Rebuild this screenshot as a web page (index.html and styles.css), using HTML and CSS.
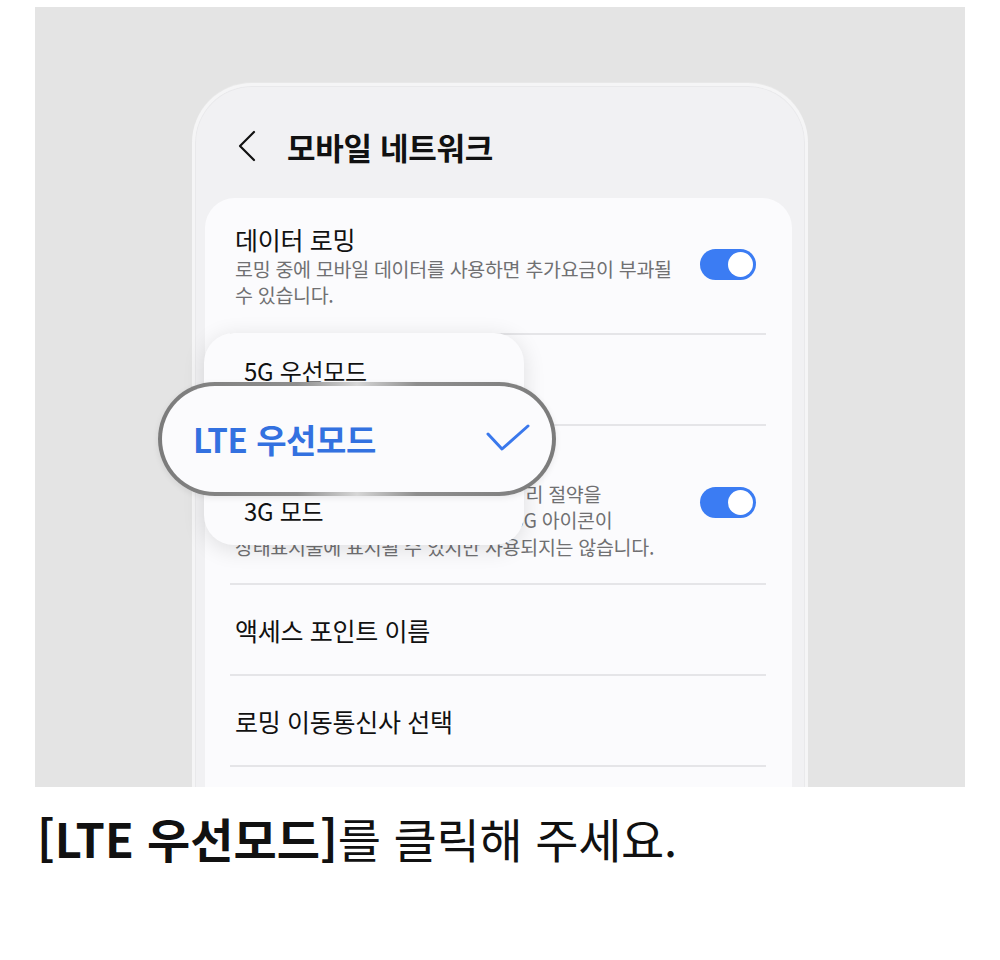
FILE: index.html
```html
<!DOCTYPE html>
<html lang="ko">
<head>
    <meta charset="utf-8">
    <title>모바일 네트워크</title>
    <link rel="stylesheet" href="styles.css">
</head>
<body>
    <div class="stage">
        <div class="phone">
            <div class="appbar">
                <svg class="back" width="20" height="32" viewBox="0 0 20 32">
                    <path d="M17 2 L3 16 L17 30" fill="none" stroke="#111" stroke-width="2.2" stroke-linecap="round" stroke-linejoin="round"/>
                </svg>
                <h1 class="appbar-title">모바일 네트워크</h1>
            </div>

            <div class="card">
                <div class="row row-first">
                    <div class="row-text">
                        <div class="row-title">데이터 로밍</div>
                        <div class="row-sub">로밍 중에 모바일 데이터를 사용하면 추가요금이 부과될<br>수 있습니다.</div>
                    </div>
                    <div class="toggle on"><span class="knob"></span></div>
                </div>

                <div class="row row-plain">
                    <div class="row-text">
                        <div class="row-title">네트워크 모드</div>
                        <div class="row-sub accent">LTE 우선모드</div>
                    </div>
                </div>

                <div class="row row-tall">
                    <div class="row-text">
                        <div class="row-title">5G 끄기</div>
                        <div class="row-sub">모바일 네트워크 연결을 줄여서, 배터리 절약을<br>할 수 있으며 네트워크 환경에 따라 5G 아이콘이<br>상태표시줄에 표시될 수 있지만 사용되지는 않습니다.</div>
                    </div>
                    <div class="toggle on"><span class="knob"></span></div>
                </div>

                <div class="row row-plain">
                    <div class="row-title">액세스 포인트 이름</div>
                </div>

                <div class="row row-plain">
                    <div class="row-title">로밍 이동통신사 선택</div>
                </div>

                <div class="row row-plain">
                    <div class="row-title">네트워크 사업자</div>
                </div>
            </div>
        </div>

        <!-- network mode dropdown -->
        <div class="menu">
            <div class="menu-item">5G 우선모드</div>
            <div class="menu-item selected">
                <div class="focus-pill">
                    <span class="focus-label">LTE 우선모드</span>
                    <svg width="46" height="30" viewBox="0 0 46 30">
                        <path d="M3 10 L17 25 L43 2" fill="none" stroke="#3a78ec" stroke-width="3" stroke-linecap="round" stroke-linejoin="round"/>
                    </svg>
                </div>
            </div>
            <div class="menu-item">3G 모드</div>
        </div>
    </div>

    <p class="caption"><b>[LTE 우선모드]</b>를 클릭해 주세요.</p>
</body>
</html>
```

FILE: styles.css
```css
body { margin: 0; background: #fff; color: #111; font-family: "Noto Sans CJK KR", "Noto Sans", sans-serif; }

.stage { position: relative; margin: 7px 35px 0; height: 780px; background: #e4e4e4; overflow: hidden; }

.phone { box-sizing: border-box; width: 616px; height: 760px; margin: 76px 0 0 157px; background: #f1f1f3; border: 3px solid #f5f5f6; border-bottom: 0; border-radius: 60px 60px 0 0; box-shadow: 0 -1px 0 #e8e8e8, inset 0 0 0 1px #e9e9eb; }

.appbar { box-sizing: border-box; height: 112px; padding: 8px 0 0 42px; display: flex; align-items: center; gap: 30px; }
.appbar-title { margin: 0; font-size: 31px; font-weight: 700; letter-spacing: -0.3px; }

.card { margin-left: 10px; width: 587px; height: 700px; box-sizing: border-box; padding: 0 26px 0 25px; background: #fbfbfd; border-radius: 30px 30px 0 0; }

.row { display: flex; align-items: center; justify-content: space-between; padding: 0 10px 0 5px; border-bottom: 2px solid #e5e5e8; box-sizing: border-box; }
.row-first { height: 137px; padding-top: 1px; }
.row-plain { height: 91px; }
.row-tall { height: 159px; }

.row-title { font-size: 25px; line-height: 30px; letter-spacing: -0.3px; }
.row-sub { margin-top: 2px; font-size: 19.5px; line-height: 26.5px; color: #707072; letter-spacing: -0.3px; }
.row-sub.accent { color: #3a78ec; }

.toggle { width: 56px; height: 31px; margin-bottom: 4px; box-sizing: border-box; padding: 3px; border-radius: 16px; background: #c9c9cc; display: flex; }
.toggle.on { background: #3b7cf3; justify-content: flex-end; }
.knob { width: 25px; height: 25px; border-radius: 50%; background: #fff; }

.menu { position: absolute; left: 169px; top: 326px; width: 320px; height: 212px; box-sizing: border-box; padding-top: 2px; background: #fbfbfd; border-radius: 30px; box-shadow: 0 4px 22px rgba(0, 0, 0, 0.12); }
.menu-item { height: 70px; padding-left: 40px; display: flex; align-items: center; font-size: 24px; letter-spacing: -0.3px; }
.menu-item.selected { position: relative; }

.focus-pill { position: absolute; left: -46px; top: -23px; width: 398px; height: 114px; box-sizing: border-box; padding: 0 21px 0 31px; display: flex; align-items: center; justify-content: space-between; border: 4px solid transparent; border-radius: 57px; background: linear-gradient(#fbfbfd, #fbfbfd) padding-box, linear-gradient(90deg, #7b7b7b, #8e8e8e 35%, #d6d6d6 50%, #8e8e8e 65%, #7b7b7b) border-box; box-shadow: 0 2px 6px rgba(0, 0, 0, 0.08); }
.focus-label { font-size: 33px; font-weight: 700; color: #3371e0; letter-spacing: -0.4px; }

.caption { margin: 17px 0 0 37px; font-size: 47px; line-height: 68px; letter-spacing: -0.3px; }
.caption b { font-weight: 700; letter-spacing: 0; }
```
